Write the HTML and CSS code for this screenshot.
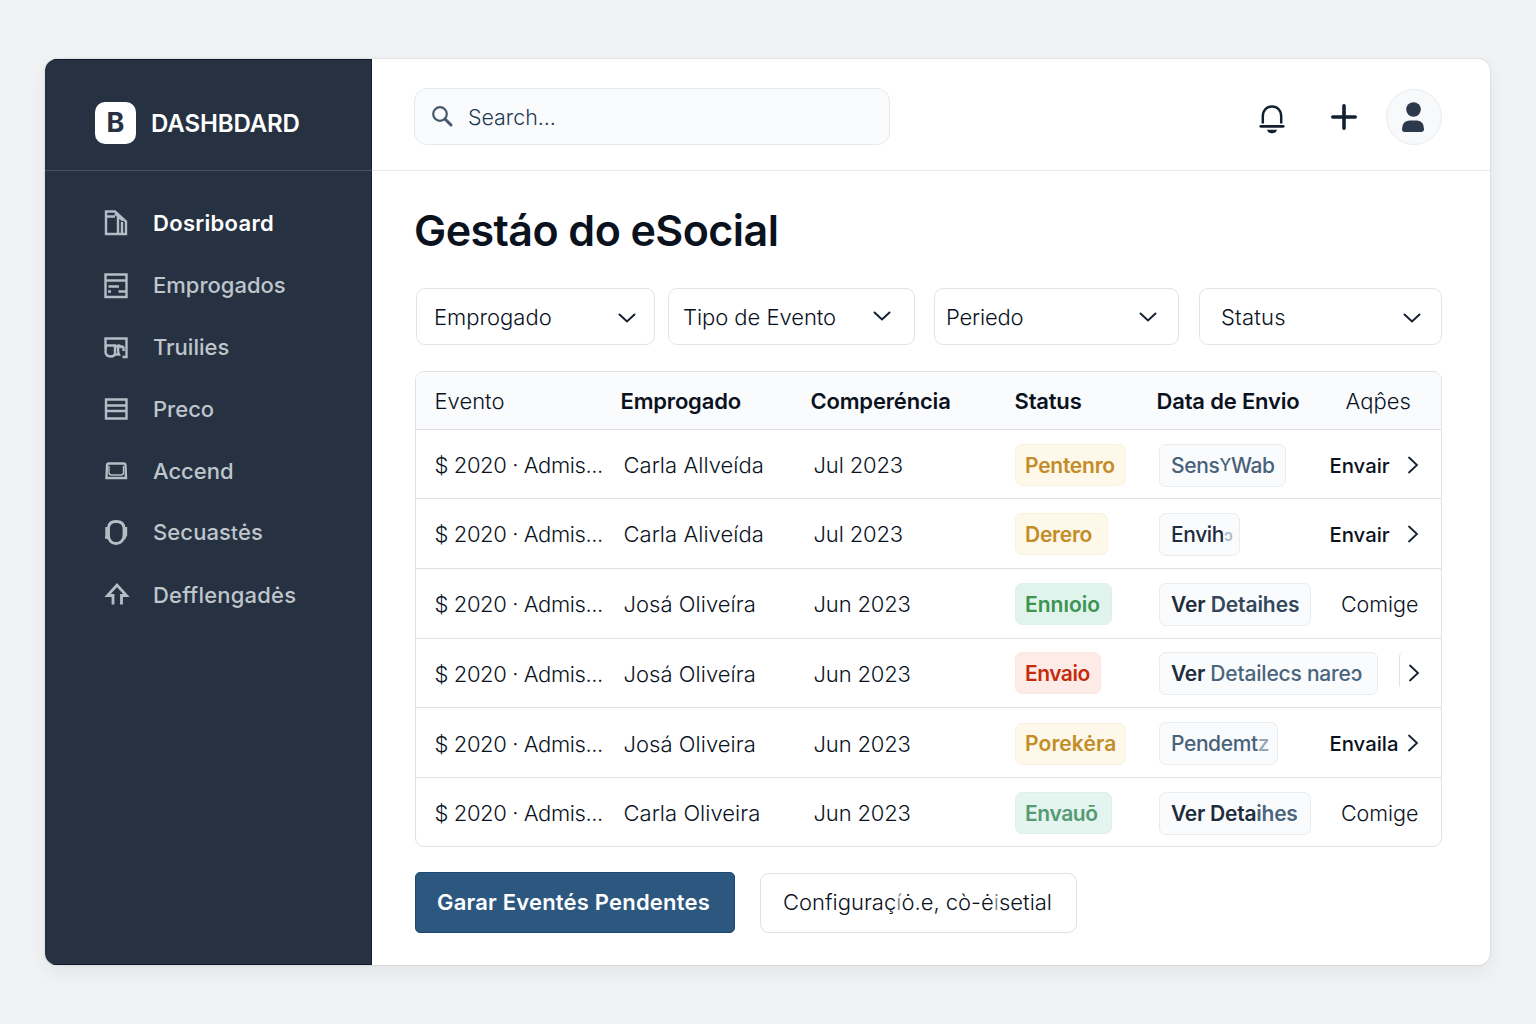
FILE: index.html
```html
<!DOCTYPE html>
<html lang="pt">
<head>
<meta charset="utf-8">
<title>Gestáo do eSocial</title>
<link rel="stylesheet" href="styles.css">
</head>
<body>
<div class="app">
  <aside class="sidebar">
    <div class="brand"><span class="brand-mark">B</span><span class="brand-name">DASHBDARD</span></div>
    <nav class="nav">
      <a class="nav-item active"><svg class="icon" viewBox="0 0 28 28"><path d="M4 2.500h9l11 10V25H4zM4 7.500h9M16 7v18M20 13v12M13 4.500l8 7"/></svg><span>Dosriboard</span></a>
      <a class="nav-item"><svg class="icon" viewBox="0 0 28 28"><path d="M3.500 3.500h21v22.500h-21zM3.500 9.500h21M6.500 15.500h10.500M6 20.500h3M16.500 20.500h7"/></svg><span>Emprogados</span></a>
      <a class="nav-item"><svg class="icon" viewBox="0 0 28 28"><path d="M3.500 16V5.500h21v18.500h-4M4 12.500h9v8.500q-1 2.500-4 2.500-5.500 0-5.500-5zM12 21.500h5q-2-4 0-9M14 14.500q2-3 4-1.500l1 1q1.500-1 2.500.500V18"/></svg><span>Truilies</span></a>
      <a class="nav-item"><svg class="icon" viewBox="0 0 28 28"><path d="M4 4.500h20.500v19H4zM4 10.500h20.500M4 16h20.500"/></svg><span>Preco</span></a>
      <a class="nav-item"><svg class="icon" viewBox="0 0 28 28"><path d="M7 6.500h14.500q2 0 2 2L24 21H4.500L5 8.500q0-2 2-2z"/><path class="thin" d="M7 9v6.500q0 2.500 2.500 2.500h9.500q2.500 0 2.500-2.500V9"/></svg><span>Accend</span></a>
      <a class="nav-item lift"><svg class="icon" viewBox="0 0 28 28"><path class="bold" d="M14 3.500c5 0 8 2.500 8 7v7c0 4.500-3.500 8-8 8s-7.500-3.500-7.500-8v-7c0-4.500 2.500-7 7.500-7z"/><path d="M4.500 9v8q1 3 2.500 4M3 19.500h3M24 9v8l-2 4"/></svg><span>Secuas<small>t</small>ės</span></a>
      <a class="nav-item last"><svg class="icon" viewBox="0 0 28 28"><path class="bold" d="M11 23.500V14.500H5.500L15 4l9.500 10.500H19.500v9"/></svg><span>Defflengadės</span></a>
    </nav>
  </aside>
  <main class="main">
    <header class="topbar">
      <div class="search"><svg class="search-icon" viewBox="0 0 24 24"><circle cx="9" cy="9" r="6.800"/><path class="handle" d="M14 14l6 6"/></svg><span>Search...</span></div>
      <div class="tools">
        <svg class="bell" viewBox="0 0 28 30"><path d="M4.800 19.500v-7C4.800 6.500 8.500 2.500 14 2.500s9.200 4 9.200 10v7"/><path class="base" d="M2.800 22.300h22.400"/><path class="clapper" d="M9 25.800h10q-1 3.500-5 3.500t-5-3.500z"/></svg>
        <svg class="plus" viewBox="0 0 26 26"><path d="M13 1.800v22.400M1.800 13h22.400"/></svg>
        <span class="avatar"><svg viewBox="0 0 24 30"><circle cx="12.500" cy="7.500" r="7.300"/><path d="M8.500 18.500h7.500q7 .500 7 8.500 0 3-3 3H3.500Q1 30 1 27q0-8 7.500-8.500z"/></svg></span>
      </div>
    </header>
    <section class="content">
      <h1>Gestáo do eSocial</h1>
      <div class="filters">
        <div class="select s1"><span>Emprogado</span><svg class="chev" viewBox="0 0 18 10"><path d="M1.500 1.500L9 8.500l7.500-7"/></svg></div>
        <div class="select s2"><span>Tipo de Evento</span><svg class="chev" viewBox="0 0 18 10"><path d="M1.500 1.500L9 8.500l7.500-7"/></svg></div>
        <div class="select s3"><span>Periedo</span><svg class="chev" viewBox="0 0 18 10"><path d="M1.500 1.500L9 8.500l7.500-7"/></svg></div>
        <div class="select s4"><span>Status</span><svg class="chev" viewBox="0 0 18 10"><path d="M1.500 1.500L9 8.500l7.500-7"/></svg></div>
      </div>
      <div class="table">
        <div class="row head"><span class="light">Evento</span><span>Emprogado</span><span>Comperéncia</span><span>Status</span><span>Data de Envio</span><span class="light actions-title">Aqp̂es</span></div>
        <div class="row r1"><span class="event">$ 2020 · Admis...</span><span class="cell">Carla Allveída</span><span class="cell">Jul 2023</span><span><b class="pill amber wide">Pentenro</b></span><span><b class="chip slate">Sens<small>Y</small>Wab</b></span><span class="action">Envair<svg class="next" viewBox="0 0 12 18"><path d="M2 1.500L10 9l-8 7.500"/></svg></span></div>
        <div class="row r2"><span class="event">$ 2020 · Admis...</span><span class="cell">Carla Aliveída</span><span class="cell">Jul 2023</span><span><b class="pill amber derero">Derero</b></span><span><b class="chip envih">Envih<span class="ghost">ɔ</span></b></span><span class="action">Envair<svg class="next" viewBox="0 0 12 18"><path d="M2 1.500L10 9l-8 7.500"/></svg></span></div>
        <div class="row r3"><span class="event">$ 2020 · Admis...</span><span class="cell">Josá Oliveíra</span><span class="cell">Jun 2023</span><span><b class="pill green">Ennıoio</b></span><span><b class="chip strong details">Ver <span class="navy">Detaihes</span></b></span><span class="action plain">Comige</span></div>
        <div class="row r4"><span class="event">$ 2020 · Admis...</span><span class="cell">Josá Oliveíra</span><span class="cell">Jun 2023</span><span><b class="pill red">Envaio</b></span><span><b class="chip long"><span class="ver">Ver </span><span class="steel">Detailecs nareɔ</span></b></span><span class="action cut"><svg class="next" viewBox="0 0 12 18"><path d="M2 1.500L10 9l-8 7.500"/></svg></span></div>
        <div class="row r5"><span class="event">$ 2020 · Admis...</span><span class="cell">Josá Oliveira</span><span class="cell">Jun 2023</span><span><b class="pill amber wide porek">Porekėra</b></span><span><b class="chip slate pend">Pendemt<span class="fade">z</span></b></span><span class="action">Envaila<svg class="next" viewBox="0 0 12 18"><path d="M2 1.500L10 9l-8 7.500"/></svg></span></div>
        <div class="row r6"><span class="event">$ 2020 · Admis...</span><span class="cell">Carla Oliveira</span><span class="cell">Jun 2023</span><span><b class="pill green pale">Envauō</b></span><span><b class="chip strong details tight">Ver Deta<span class="steel">ihes</span></b></span><span class="action plain">Comige</span></div>
      </div>
      <div class="buttons"><a class="primary">Garar Eventés Pendentes</a><a class="secondary">Configuraç<span class="fade">í</span>ȯ.e, cò-ė<span class="fade">ı̇</span>setial</a></div>
    </section>
  </main>
</div>
</body>
</html>
```
FILE: styles.css
```css
* { box-sizing: border-box; }

body {
  margin: 0;
  width: 1536px;
  height: 1024px;
  padding: 59px 0 0 45px;
  overflow: hidden;
  background: #f1f2f4;
  color: #0a121e;
  font-family: Inter, "Liberation Sans", sans-serif;
  font-size: 22px;
  font-weight: 350;
}

svg { display: block; flex: none; fill: none; stroke: #142030; }

.app {
  display: flex;
  width: 1445px;
  height: 906px;
  overflow: hidden;
  border-radius: 12px;
  background: #fff;
  box-shadow: 0 0 2px #0003, 0 8px 20px #0000000f;
}

/* Sidebar */
.sidebar { width: 327px; background: #263242; box-shadow: inset 0 1px 0 #0f1b2d, inset 0 -1px 0 #0f1b2d, inset -1px 0 0 #14202f; }
.brand {
  display: flex;
  align-items: center;
  gap: 15px;
  height: 112px;
  padding: 16px 0 0 50px;
  border-bottom: 1px solid #46535f;
  color: #fff;
  font-size: 24px;
  font-weight: 600;
}
.brand-name { padding-top: 2px; letter-spacing: -0.1px; }
.brand-mark {
  display: grid;
  place-items: center;
  width: 41px;
  height: 42px;
  border-radius: 10px;
  background: #fff;
  color: #263242;
  font-size: 27px;
  font-weight: 700;
}
.nav { padding: 21px 0 0 57px; }
.nav-item {
  display: flex;
  align-items: center;
  gap: 23px;
  height: 62px;
  color: #bec5cb;
  font-weight: 500;
}
.nav-item small { font-size: 20px; }
.nav-item.active { color: #fff; font-weight: 600; letter-spacing: 0.3px; }
.nav-item.lift { padding-bottom: 3px; letter-spacing: 0.1px; }
.nav-item.last { padding-bottom: 1px; letter-spacing: 0.2px; }
.icon { width: 28px; height: 28px; stroke: #b4bdc5; stroke-width: 2.4; }
.icon .bold { stroke-width: 2.8; }
.icon .thin { stroke-width: 1.4; }

/* Top bar */
.main { flex: 1; min-width: 0; }
.topbar {
  display: flex;
  justify-content: space-between;
  height: 112px;
  padding: 29px 48px 0 42px;
  border-bottom: 1px solid #e6e8ea;
}
.search {
  display: flex;
  align-items: center;
  gap: 13px;
  width: 476px;
  height: 57px;
  padding-left: 16px;
  border: 1px solid #e6e8ea;
  border-radius: 13px;
  background: #fafbfd;
  color: #1f3a54;
  font-size: 21.4px;
}
.search-icon { width: 24px; height: 24px; stroke: #46586c; stroke-width: 2.2; }
.search-icon .handle { stroke-width: 3; stroke-linecap: round; }
.tools { display: flex; align-items: center; height: 58px; }
.bell { width: 28px; height: 30px; margin: 4px 45px 0 0; stroke-width: 2.5; }
.bell .base { stroke-width: 2.8; stroke-linecap: round; }
.bell .clapper { fill: #142030; stroke: none; }
.plus { width: 26px; height: 26px; margin-right: 29px; stroke-width: 3.6; stroke-linecap: round; }
.avatar {
  display: grid;
  place-items: center;
  width: 56px;
  height: 56px;
  border: 1px solid #e9ebee;
  border-radius: 50%;
  background: #f8f9fb;
}
.avatar svg { width: 24px; height: 30px; margin-right: 3px; fill: #2b394b; stroke: none; }

/* Content */
.content { padding: 31px 48px 0 43px; }
h1 { margin: 0 0 0 -1px; font-size: 43px; font-weight: 590; line-height: 56px; letter-spacing: -0.57px; }

.filters { display: flex; margin-top: 30px; padding-left: 1px; }
.select {
  display: flex;
  align-items: center;
  justify-content: space-between;
  height: 57px;
  padding-top: 1px;
  border: 1px solid #e2e4e7;
  border-radius: 9px;
}
.chev { width: 18px; height: 10px; margin-top: 2px; stroke-width: 2; stroke-linecap: round; }
.s1 { width: 239px; padding-left: 17px; padding-right: 18px; }
.s2 { width: 247px; margin-left: 13px; padding-left: 14px; padding-right: 23px; letter-spacing: -0.05px; }
.s3 { width: 245px; margin-left: 19px; padding-left: 11px; padding-right: 21px; letter-spacing: -0.2px; }
.s4 { width: 243px; margin-left: 20px; padding-left: 21px; padding-right: 20px; letter-spacing: 0.2px; }
.s2 .chev { margin-top: 0; margin-bottom: 2px; }
.s3 .chev { margin-top: 0; }

/* Table */
.table { margin-top: 26px; height: 476px; overflow: hidden; border: 1px solid #dfe1e4; border-radius: 9px; }
.row {
  display: grid;
  grid-template-columns: 186px 190px 204px 142px 171px 1fr;
  align-items: center;
  height: 70px;
  padding: 1px 0 0 18.5px;
  border-bottom: 1px solid #dfe1e4;
  white-space: nowrap;
}
.head { height: 58px; padding-top: 0; background: #fafbfd; font-weight: 600; letter-spacing: -0.18px; }
.light { font-weight: 350; letter-spacing: 0; }
.actions-title { padding-left: 18px; }
.r1, .r4 { height: 69px; padding-top: 2px; }
.r5 { padding-top: 2px; }
.r6 { height: 69px; border-bottom: 0; padding-top: 1px; }
.event { letter-spacing: -0.4px; }
.cell { padding-left: 3px; letter-spacing: 0.04px; }
.cell + .cell { letter-spacing: -0.15px; }
.pill, .chip {
  display: flex;
  align-items: center;
  width: max-content;
  border: 1px solid;
  border-radius: 7px;
  font-size: 21px;
}
.pill { width: 97px; height: 42px; margin-left: 0.5px; padding-left: 9px; font-weight: 590; letter-spacing: -0.25px; }
.pill.wide { width: 111px; }
.pill.porek { letter-spacing: 0.1px; }
.pill.derero { width: 93px; }
.pill.red { width: 86px; margin-bottom: 2px; border-color: #fce6e2; background: #fdebe8; color: #c52c0c; font-weight: 620; letter-spacing: -0.5px; }
.pill.amber { border-color: #faf1dc; background: #fdf8ea; color: #c38c27; }
.pill.green { border-color: #dcf1e9; background: #e0f3ec; color: #3b9450; letter-spacing: 0; }
.pill.green.pale { background: #e4f4ee; color: #559a74; letter-spacing: -0.4px; }
.chip {
  width: 127px;
  height: 43px;
  margin-left: 2.5px;
  padding-left: 11px;
  border-color: #e9ecef;
  background: #fafbfd;
  color: #1e2d3d;
  font-weight: 500;
  white-space: pre;
}
.chip.slate { color: #48627a; letter-spacing: -0.35px; }
.chip.slate small { font-size: 17px; }
.chip.envih { width: 81px; letter-spacing: -0.4px; }
.chip.details { width: 152px; }
.chip.strong { font-weight: 560; letter-spacing: -0.1px; }
.chip.tight { letter-spacing: -0.25px; }
.chip.long { width: 219px; margin-bottom: 2px; letter-spacing: -0.2px; }
.chip.pend { width: 119px; letter-spacing: -0.4px; }
.ver { font-weight: 570; }
.navy { color: #33475b; }
.steel { color: #4a657c; }
.ghost { padding-top: 2px; color: #a9b6c4; font-size: 16px; }
.fade { opacity: 0.55; }
.action { display: flex; align-items: center; justify-content: space-between; padding: 0 22px 0 2px; font-size: 20.3px; font-weight: 490; }
.action.plain { justify-content: flex-end; padding-right: 22.5px; font-size: 21.5px; font-weight: 350; }
.action.cut { justify-content: flex-end; align-self: start; height: 36px; margin: 10px 0 0 71px; padding-top: 8px; padding-right: 21px; border-left: 1px solid #dfe2e6; border-radius: 6px 0 0 0; }
.next { width: 12px; height: 18px; margin-bottom: 1px; stroke-width: 1.8; stroke-linecap: round; }

/* Footer buttons */
.buttons { display: flex; gap: 25px; margin-top: 25px; line-height: 26px; }
.primary {
  width: 320px;
  height: 61px;
  padding: 16px 21px;
  border: 1px solid #1c4873;
  border-radius: 5px;
  background: #2c577f;
  color: #fff;
  font-weight: 600;
  letter-spacing: 0.2px;
  white-space: nowrap;
}
.secondary { width: 317px; height: 60px; margin-top: 1px; padding: 15px 22px; border: 1px solid #dfe1e4; border-radius: 9px; white-space: nowrap; }
```
